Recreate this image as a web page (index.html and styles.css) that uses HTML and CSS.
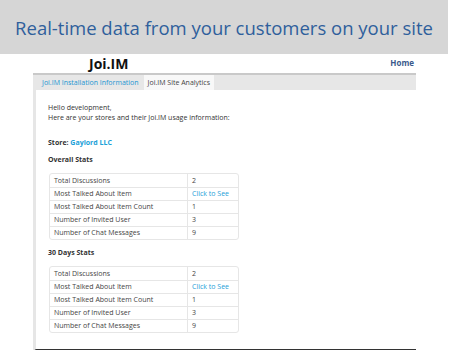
FILE: index.html
```html
<html>
<head>
  <title>Joi.IM Site Analytics</title>
  <link rel="stylesheet" href="styles.css">
</head>
<body>
  <!-- Slide banner -->
  <div class="banner">Real-time data from your customers on your site</div>

  <div class="page">
    <!-- Logo and home link -->
    <div class="topbar">
      <span class="logo">Joi.IM</span>
      <a class="home" href="#">Home</a>
    </div>

    <!-- Tabs -->
    <div class="tabs">
      <span class="tab">Joi.IM Installation Information</span>
      <span class="tab active">Joi.IM Site Analytics</span>
    </div>

    <!-- Analytics content -->
    <div class="content">
      <p class="intro">Hello development,<br>Here are your stores and their Joi.IM usage information:</p>

      <p class="store">Store: <a href="#">Gaylord LLC</a></p>

      <h4>Overall Stats</h4>
      <table class="stats">
        <tr><td>Total Discussions</td><td>2</td></tr>
        <tr><td>Most Talked About Item</td><td><a href="#">Click to See</a></td></tr>
        <tr><td>Most Talked About Item Count</td><td>1</td></tr>
        <tr><td>Number of Invited User</td><td>3</td></tr>
        <tr><td>Number of Chat Messages</td><td>9</td></tr>
      </table>

      <h4>30 Days Stats</h4>
      <table class="stats">
        <tr><td>Total Discussions</td><td>2</td></tr>
        <tr><td>Most Talked About Item</td><td><a href="#">Click to See</a></td></tr>
        <tr><td>Most Talked About Item Count</td><td>1</td></tr>
        <tr><td>Number of Invited User</td><td>3</td></tr>
        <tr><td>Number of Chat Messages</td><td>9</td></tr>
      </table>
    </div>
  </div>
</body>
</html>
```

FILE: styles.css
```css
/* Page base */
body {
  margin: 0;
  background: #fff;
  font-family: 'Open Sans', sans-serif;
  color: #333;
}

/* Gray slide banner at the top */
.banner {
  width: 448px;
  height: 54px;
  background: #d6d6d6;
  color: #2f5f9c;
  font-size: 18.5px;
  line-height: 56px;
  text-align: center;
  white-space: nowrap;
}

/* Screenshot of the site */
.page {
  width: 383px;
  margin-left: 33px;
}

.topbar {
  display: flex;
  justify-content: space-between;
  align-items: flex-end;
  height: 19px;
  padding: 0 2px 0 56px;
}

.logo {
  font-size: 14px;
  font-weight: 700;
  color: #111;
  line-height: 18px;
}

.home {
  align-self: flex-start;
  margin-top: 3px;
  font-size: 8px;
  font-weight: 700;
  color: #3b5a8c;
  text-decoration: none;
}

/* Tab strip */
.tabs {
  display: flex;
  border-top: 2px solid #c9c9c9;
  background: #e7e7e7;
  height: 15px;
  padding-left: 5px;
}

.tab {
  padding: 0 4px;
  font-size: 7px;
  line-height: 15px;
  color: #1c95d2;
  margin-right: 1px;
}

.tab.active {
  background: #f8f8f8;
  color: #444;
}

/* Main content area */
.content {
  border-left: 3px solid #e6e6e6;
  border-bottom: 2px solid #333;
  padding: 13px 0 8px 12px;
  font-size: 7px;
}

.content p {
  margin: 0;
  line-height: 10px;
}

.store {
  margin-top: 15px !important;
  font-weight: 700;
}

.content a {
  color: #1ba0d8;
  text-decoration: none;
}

h4 {
  margin: 7px 0 8px;
  font-size: 7px;
  font-weight: 700;
  line-height: 10px;
}

/* Stats tables */
.stats {
  width: 190px;
  border-collapse: separate;
  border-spacing: 0;
  border: 1px solid #e6e6e6;
  border-radius: 3px;
  margin-bottom: 8px;
  margin-left: 1px;
}

.stats td {
  height: 13px;
  padding: 0 4px;
  border-top: 1px solid #e6e6e6;
  font-size: 7px;
  line-height: 10px;
  color: #444;
}

.stats tr:first-child td {
  border-top: none;
}

.stats td:first-child {
  width: 129px;
  border-right: 1px solid #e6e6e6;
}
```
